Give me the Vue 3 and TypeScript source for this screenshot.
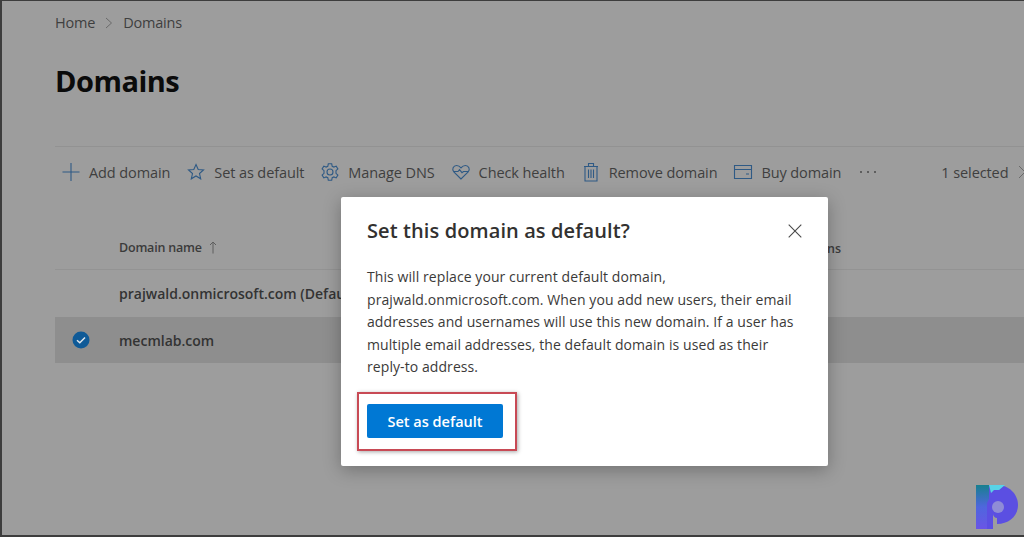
<script setup lang="ts">
interface Action {
  id: string
  label: string
}

const actions: Action[] = [
  { id: 'add', label: 'Add domain' },
  { id: 'star', label: 'Set as default' },
  { id: 'gear', label: 'Manage DNS' },
  { id: 'health', label: 'Check health' },
  { id: 'trash', label: 'Remove domain' },
  { id: 'card', label: 'Buy domain' },
]

const bodyLines: string[] = [
  'This will replace your current default domain,',
  'prajwald.onmicrosoft.com. When you add new users, their email',
  'addresses and usernames will use this new domain. If a user has',
  'multiple email addresses, the default domain is used as their',
  'reply-to address.',
]
</script>

<template>
  <div class="shot">
    <div class="page">
      <nav class="crumbs">
        <span>Home</span>
        <svg class="crumb-sep" width="8" height="12" viewBox="0 0 8 12"><path d="M1 1l5.500 5L1 11" /></svg>
        <span>Domains</span>
      </nav>
      <h1 class="title">Domains</h1>
      <div class="toolbar">
        <div v-for="a in actions" :key="a.id" class="action">
          <svg class="ico" width="20" height="20" viewBox="0 0 20 20">
            <path v-if="a.id === 'add'" d="M10 1v18M1.500 10h17" />
            <path v-else-if="a.id === 'star'" d="M10 2.500l2.200 5 5.300.5-4 3.500 1.200 5.300L10 14l-4.700 2.800 1.200-5.300-4-3.500 5.300-.5z" />
            <g v-else-if="a.id === 'gear'">
              <circle cx="10" cy="10" r="3" />
              <path d="M8.300 1.800h3.400l.5 2.500 1.700.8 2.300-1 1.700 2.900-1.900 1.700v2.600l1.900 1.700-1.700 2.900-2.300-1-1.700.8-.5 2.500H8.300l-.5-2.500-1.700-.8-2.300 1-1.700-2.900 1.900-1.700V8.700L2.100 7l1.700-2.900 2.300 1 1.700-.8z" />
            </g>
            <g v-else-if="a.id === 'health'">
              <path d="M10 17L2.800 9.800C.6 7.400 2.200 3.500 5.600 3.500c1.900 0 3.300 1 4.400 2.400 1.100-1.400 2.500-2.400 4.400-2.400 3.400 0 5 3.900 2.800 6.300z" />
              <path d="M3 9.500h4l1.500-1.800 2.500 3 1.500-1.200H17" />
            </g>
            <g v-else-if="a.id === 'trash'">
              <path d="M3 4.500h14M7.500 4.500V1.500h5v3M4 4.500V19h12V4.500M7.500 7.500v8.500M10 7.500v8.500M12.500 7.500v8.500" />
            </g>
            <g v-else>
              <path d="M1.500 3.500h17v13h-17zM1.500 7.500h17M13 12h3" />
            </g>
          </svg>
          <span>{{ a.label }}</span>
        </div>
        <span class="more"><i></i><i></i><i></i></span>
        <span class="selected">1 selected</span>
        <svg class="sel-x" width="8" height="14" viewBox="0 0 8 14"><path d="M1 1l6 6-6 6" /></svg>
      </div>

      <div class="table">
        <div class="thead">
          <span class="th-name">Domain name</span>
          <svg width="8" height="13" viewBox="0 0 8 13" class="sort"><path d="M4 12.500V1M1 4l3-3 3 3" /></svg>
        </div>
        <div class="row">
          <span class="check"></span>
          <span class="cell">prajwald.onmicrosoft.com (Default)</span>
        </div>
        <div class="row row-on">
          <span class="check">
            <svg width="18" height="18" viewBox="0 0 18 18">
              <circle cx="9" cy="9" r="8.500" fill="#0f5a97" />
              <path d="M5 9.300l2.800 2.500L13 6.500" fill="none" stroke="#dfe6ec" stroke-width="1.500" />
            </svg>
          </span>
          <span class="cell">mecmlab.com</span>
        </div>
      </div>
    </div>

    <span class="col-ns">ns</span>

    <section class="dialog">
      <header class="dlg-head">
        <h2>Set this domain as default?</h2>
        <svg width="14" height="14" viewBox="0 0 14 14" class="close"><path d="M.7.7l12.600 12.600M13.300.7L.7 13.300" /></svg>
      </header>
      <p class="dlg-body">
        <span v-for="line in bodyLines" :key="line" class="dlg-line">{{ line }}</span>
      </p>
      <div class="dlg-foot">
        <button class="primary">Set as default</button>
      </div>
    </section>

    <svg class="logo" width="44" height="46" viewBox="0 0 44 46">
      <defs>
        <linearGradient id="lg" x1="0" y1="0" x2="0" y2="1">
          <stop offset="0" stop-color="#17808f" />
          <stop offset="0.5" stop-color="#4f66de" />
          <stop offset="1" stop-color="#6a55e6" />
        </linearGradient>
      </defs>
      <path fill="#5b4fe2" d="M10 1h12c12 0 21 9 21 20s-9 19-21 19v-6c-2 0-4-2-4-4v15h-6V16z" />
      <path fill="url(#lg)" d="M1 1h13v14l-2 4v26H1z" />
      <path fill="#58d3e6" d="M14 1h16l-6 5h-5l-3 3z" />
      <circle cx="23" cy="23" r="6" fill="#8f8cd6" />
    </svg>
  </div>
</template>

<style scoped>
.shot {
  position: relative;
  width: 1024px;
  height: 537px;
  box-sizing: border-box;
  overflow: hidden;
  background: #9d9d9d;
  border-left: 2px solid #3d3d3d;
  border-top: 1px solid #3d3d3d;
  border-bottom: 2px solid #3d3d3d;
  font-family: "Open Sans", "Noto Sans", sans-serif;
  color: #333;
}

.page {
  padding: 13px 0 0 53px;
  display: flex;
  flex-direction: column;
}

.crumbs {
  display: flex;
  align-items: center;
  gap: 10px;
  font-size: 14.500px;
  line-height: 18px;
  color: #3f3f3f;
  letter-spacing: -0.2px;
}

.crumb-sep path {
  fill: none;
  stroke: #6a6a6a;
  stroke-width: 1;
}

.title {
  margin: 31px 0 0;
  font-size: 29px;
  line-height: 36px;
  font-weight: 700;
  color: #0b0b0b;
  letter-spacing: -0.5px;
}

.toolbar {
  margin-top: 47px;
  height: 50px;
  border-top: 1px solid #929292;
  display: flex;
  align-items: center;
  gap: 16px;
  font-size: 14.500px;
  color: #3f3f3f;
  padding-left: 6px;
  letter-spacing: -0.1px;
}

.action {
  display: flex;
  align-items: center;
  gap: 8px;
  white-space: nowrap;
}

.ico,
.ico * {
  fill: none;
  stroke: #2f5a85;
  stroke-width: 1.100;
}

.more {
  display: flex;
  gap: 5px;
  margin-left: 3px;
}

.more i {
  width: 2px;
  height: 2px;
  border-radius: 50%;
  background: #4a4a4a;
}

.selected {
  margin-left: 49px;
  white-space: nowrap;
}

.sel-x {
  margin-left: -6px;
  flex-shrink: 0;
}

.sel-x path {
  fill: none;
  stroke: #6a6a6a;
}

.table {
  margin-top: 29px;
  font-size: 14px;
}

.thead {
  height: 44px;
  display: flex;
  align-items: center;
  gap: 7px;
  padding-left: 64px;
  border-bottom: 1px solid #939393;
  box-sizing: border-box;
  font-size: 12.500px;
  font-weight: 600;
  color: #3b3b3b;
  letter-spacing: -0.2px;
}

.sort path {
  fill: none;
  stroke: #5e5e5e;
}

.row {
  height: 47px;
  display: flex;
  align-items: center;
  font-weight: 600;
  color: #333;
  white-space: nowrap;
}

.row-on {
  height: 46px;
  background: #8e8e8e;
}

.check {
  width: 64px;
  padding-left: 17px;
  box-sizing: border-box;
  display: flex;
  align-items: center;
}

.col-ns {
  position: absolute;
  left: 825px;
  top: 239px;
  font-size: 12.500px;
  font-weight: 600;
  color: #3b3b3b;
}

.dialog {
  position: absolute;
  left: 339px;
  top: 196px;
  width: 487px;
  height: 269px;
  box-sizing: border-box;
  padding: 20px 26px 0;
  background: #fff;
  border-radius: 2px;
  box-shadow: 0 4px 18px rgba(0, 0, 0, 0.28);
}

.dlg-head {
  display: flex;
  align-items: center;
  justify-content: space-between;
}

.dlg-head h2 {
  margin: 0;
  font-size: 20px;
  line-height: 28px;
  font-weight: 600;
  color: #323130;
  letter-spacing: 0.1px;
}

.close path {
  fill: none;
  stroke: #4a4a4a;
  stroke-width: 1.100;
}

.dlg-body {
  margin: 21px 0 0;
  font-size: 14px;
  line-height: 22.500px;
  color: #3b3a39;
  letter-spacing: 0.08px;
}

.dlg-line {
  display: block;
  white-space: nowrap;
}

.dlg-foot {
  margin-top: 13px;
  margin-left: -10px;
  width: 160px;
  height: 59px;
  box-sizing: border-box;
  border: 2px solid #c84a55;
  box-shadow: 1px 1px 4px rgba(0, 0, 0, 0.35);
  display: flex;
  align-items: center;
  padding-left: 8px;
}

.primary {
  width: 136px;
  height: 34px;
  border: 0;
  border-radius: 2px;
  background: #0078d4;
  color: #fff;
  font-family: inherit;
  font-size: 14.500px;
  font-weight: 600;
  padding: 0;
}

.logo {
  position: absolute;
  left: 973px;
  top: 483px;
}
</style>

<style>
html,
body {
  margin: 0;
  background: #9d9d9d;
}
</style>
